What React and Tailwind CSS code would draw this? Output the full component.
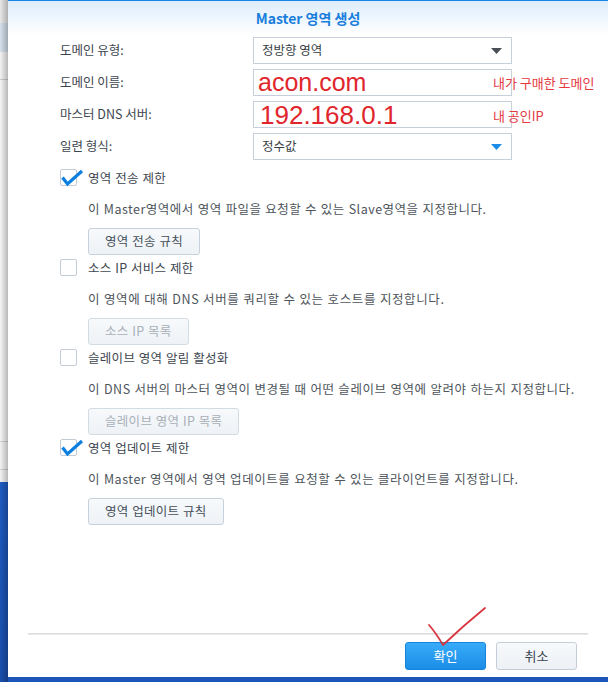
import React from "react";

const KR = { fontFamily: '"Noto Sans CJK KR", "Noto Sans", sans-serif' };

function Checkbox({ checked }) {
  return (
    <div className="relative w-[17px] h-[17px] shrink-0 border border-[#c3ccd6] bg-white rounded-[2px]">
      {checked && (
        <svg
          className="absolute left-[-1px] top-[-1px] overflow-visible"
          width="24"
          height="18"
          viewBox="0 0 24 18"
        >
          <path d="M2.5 8.5 L7.5 15 L22 2" fill="none" stroke="#0b7fe0" strokeWidth="3.2" strokeLinejoin="miter" />
        </svg>
      )}
    </div>
  );
}

function Section({ checked, label, desc, descClass, button, disabled, first }) {
  return (
    <div className={first ? "" : "mt-[4px]"}>
      <div className="flex items-center h-[17px]">
        <Checkbox checked={checked} />
        <span className="ml-[11px] text-[12.5px] text-[#3d4650] leading-[17px] tracking-[0.3px] [word-spacing:0.5px]">{label}</span>
      </div>
      <div className={"ml-[28px] mt-[14px] h-[18px] leading-[18px] text-[12.5px] text-[#4e555c] whitespace-nowrap [word-spacing:0.5px] " + descClass}>{desc}</div>
      <div className="ml-[28px] mt-[10px] flex">
        <div
          className={
            "h-[27px] px-[16px] flex items-center rounded-[3px] border text-[12.5px] tracking-[0.3px] bg-gradient-to-b from-[#f7f9fb] to-[#eef2f6] [word-spacing:0.5px] " +
            (disabled ? "border-[#d3dbe3] text-[#a9b0b8]" : "border-[#c7d1dc] text-[#46505a]")
          }
        >
          {button}
        </div>
      </div>
    </div>
  );
}

function SelectBox({ text, arrow }) {
  return (
    <div className="w-[259px] h-[27px] border border-[#c6d0db] bg-white flex items-center justify-between pl-[8px] pr-[9px]">
      <span className="text-[12.5px] text-[#3a3f45]">{text}</span>
      <svg width="11" height="6" viewBox="0 0 11 6">
        <path d="M0 0 L11 0 L5.5 6 Z" fill={arrow} />
      </svg>
    </div>
  );
}

export default function App() {
  return (
    <div className="w-[608px] h-[682px] bg-[#1b55ba] flex overflow-hidden" style={KR}>
      {/* background app strip on the left */}
      <div className="relative w-[8px] shrink-0 flex flex-col">
        <div className="h-[23px] bg-[#e8e8e8]" />
        <div className="h-[29px] bg-[#d5e1ed]" />
        <div className="h-[28px] bg-[#f3f3f3] border-b border-[#cdcdcd]" />
        <div className="h-[362px] bg-[#f6f6f6] border-b border-[#d2d2d2]" />
        <div className="h-[28px] bg-[#f3f3f3] border-b border-[#d2d2d2]" />
        <div className="h-[12px] bg-[#f3f3f3]" />
        <div className="flex-1 bg-gradient-to-b from-[#1f5cc4] to-[#1a4fae]" />
        <div className="absolute inset-0 bg-gradient-to-r from-black/0 to-black/25" />
      </div>

      {/* dialog */}
      <div className="relative flex-1 h-[677px] bg-white flex flex-col border-t border-[#1487e6]">
        <div className="h-[34px] shrink-0 bg-gradient-to-b from-[#ddedfb] to-white flex items-center justify-center">
          <span className="text-[14px] font-bold text-[#1a7fdc]">Master 영역 생성</span>
        </div>

        <div className="flex-1 pl-[52px]">
          <div className="flex flex-col gap-[5px] mt-[2px]">
            <div className="flex items-center">
              <div className="w-[193px] text-[12.5px] text-[#3d4650]">도메인 유형:</div>
              <SelectBox text="정방향 영역" arrow="#4a4f55" />
            </div>
            <div className="flex items-center relative">
              <div className="w-[193px] text-[12.5px] text-[#3d4650]">도메인 이름:</div>
              <div className="w-[259px] h-[27px] border border-[#c6d0db] bg-white flex items-center pl-[4px]">
                <span className="text-[25px] leading-none text-[#e0262c]" style={{ fontFamily: '"Liberation Sans", Arial, sans-serif' }}>
                  acon.com
                </span>
              </div>
              <span className="absolute left-[433px] top-[4px] text-[13px] text-[#e53a3f] whitespace-nowrap">내가 구매한 도메인</span>
            </div>
            <div className="flex items-center relative">
              <div className="w-[193px] text-[12.5px] text-[#3d4650]">마스터 DNS 서버:</div>
              <div className="w-[259px] h-[27px] border border-[#c6d0db] bg-white flex items-center pl-[6px]">
                <span className="text-[26px] leading-none text-[#e0262c]" style={{ fontFamily: '"Liberation Sans", Arial, sans-serif' }}>
                  192.168.0.1
                </span>
              </div>
              <span className="absolute left-[433px] top-[5px] text-[13px] text-[#e53a3f] whitespace-nowrap">내 공인IP</span>
            </div>
            <div className="flex items-center">
              <div className="w-[193px] text-[12.5px] text-[#3d4650]">일련 형식:</div>
              <SelectBox text="정수값" arrow="#1a8be8" />
            </div>
          </div>

          <div className="mt-[9px]">
            <Section
              first
              checked
              label="영역 전송 제한"
              desc="이 Master영역에서 영역 파일을 요청할 수 있는 Slave영역을 지정합니다."
              descClass="tracking-[0.5px]"
              button="영역 전송 규칙"
            />
            <Section
              label="소스 IP 서비스 제한"
              desc="이 영역에 대해 DNS 서버를 쿼리할 수 있는 호스트를 지정합니다."
              descClass="tracking-[0.6px]"
              button="소스 IP 목록"
              disabled
            />
            <Section
              label="슬레이브 영역 알림 활성화"
              desc="이 DNS 서버의 마스터 영역이 변경될 때 어떤 슬레이브 영역에 알려야 하는지 지정합니다."
              descClass="tracking-[0.55px]"
              button="슬레이브 영역 IP 목록"
              disabled
            />
            <Section
              checked
              label="영역 업데이트 제한"
              desc="이 Master 영역에서 영역 업데이트를 요청할 수 있는 클라이언트를 지정합니다."
              descClass="tracking-[0.55px]"
              button="영역 업데이트 규칙"
            />
          </div>
        </div>

        <div className="mx-[20px] h-[2px] bg-gradient-to-b from-[#d8d8d8] to-[#eeeeee]" />
        <div className="flex justify-end gap-[10px] pr-[31px] pt-[7px] pb-[7px]">
          <div className="w-[81px] h-[28px] rounded-[3px] border border-[#1783da] bg-gradient-to-b from-[#38abfa] to-[#1a8de6] flex items-center justify-center text-[13px] text-white">
            확인
          </div>
          <div className="w-[81px] h-[28px] rounded-[3px] border border-[#c5ced8] bg-gradient-to-b from-[#f7f9fb] to-[#edf1f5] flex items-center justify-center text-[13px] text-[#3a4550]">
            취소
          </div>
        </div>

        {/* red hand-drawn check annotation */}
        <svg className="absolute left-0 top-0 pointer-events-none" width="600" height="677" viewBox="0 0 600 677">
          <path d="M421 624 Q428 632 435 644 Q455 625 477 607" fill="none" stroke="#d8363f" strokeWidth="1.8" strokeLinecap="round" strokeLinejoin="round" />
        </svg>
      </div>
    </div>
  );
}
